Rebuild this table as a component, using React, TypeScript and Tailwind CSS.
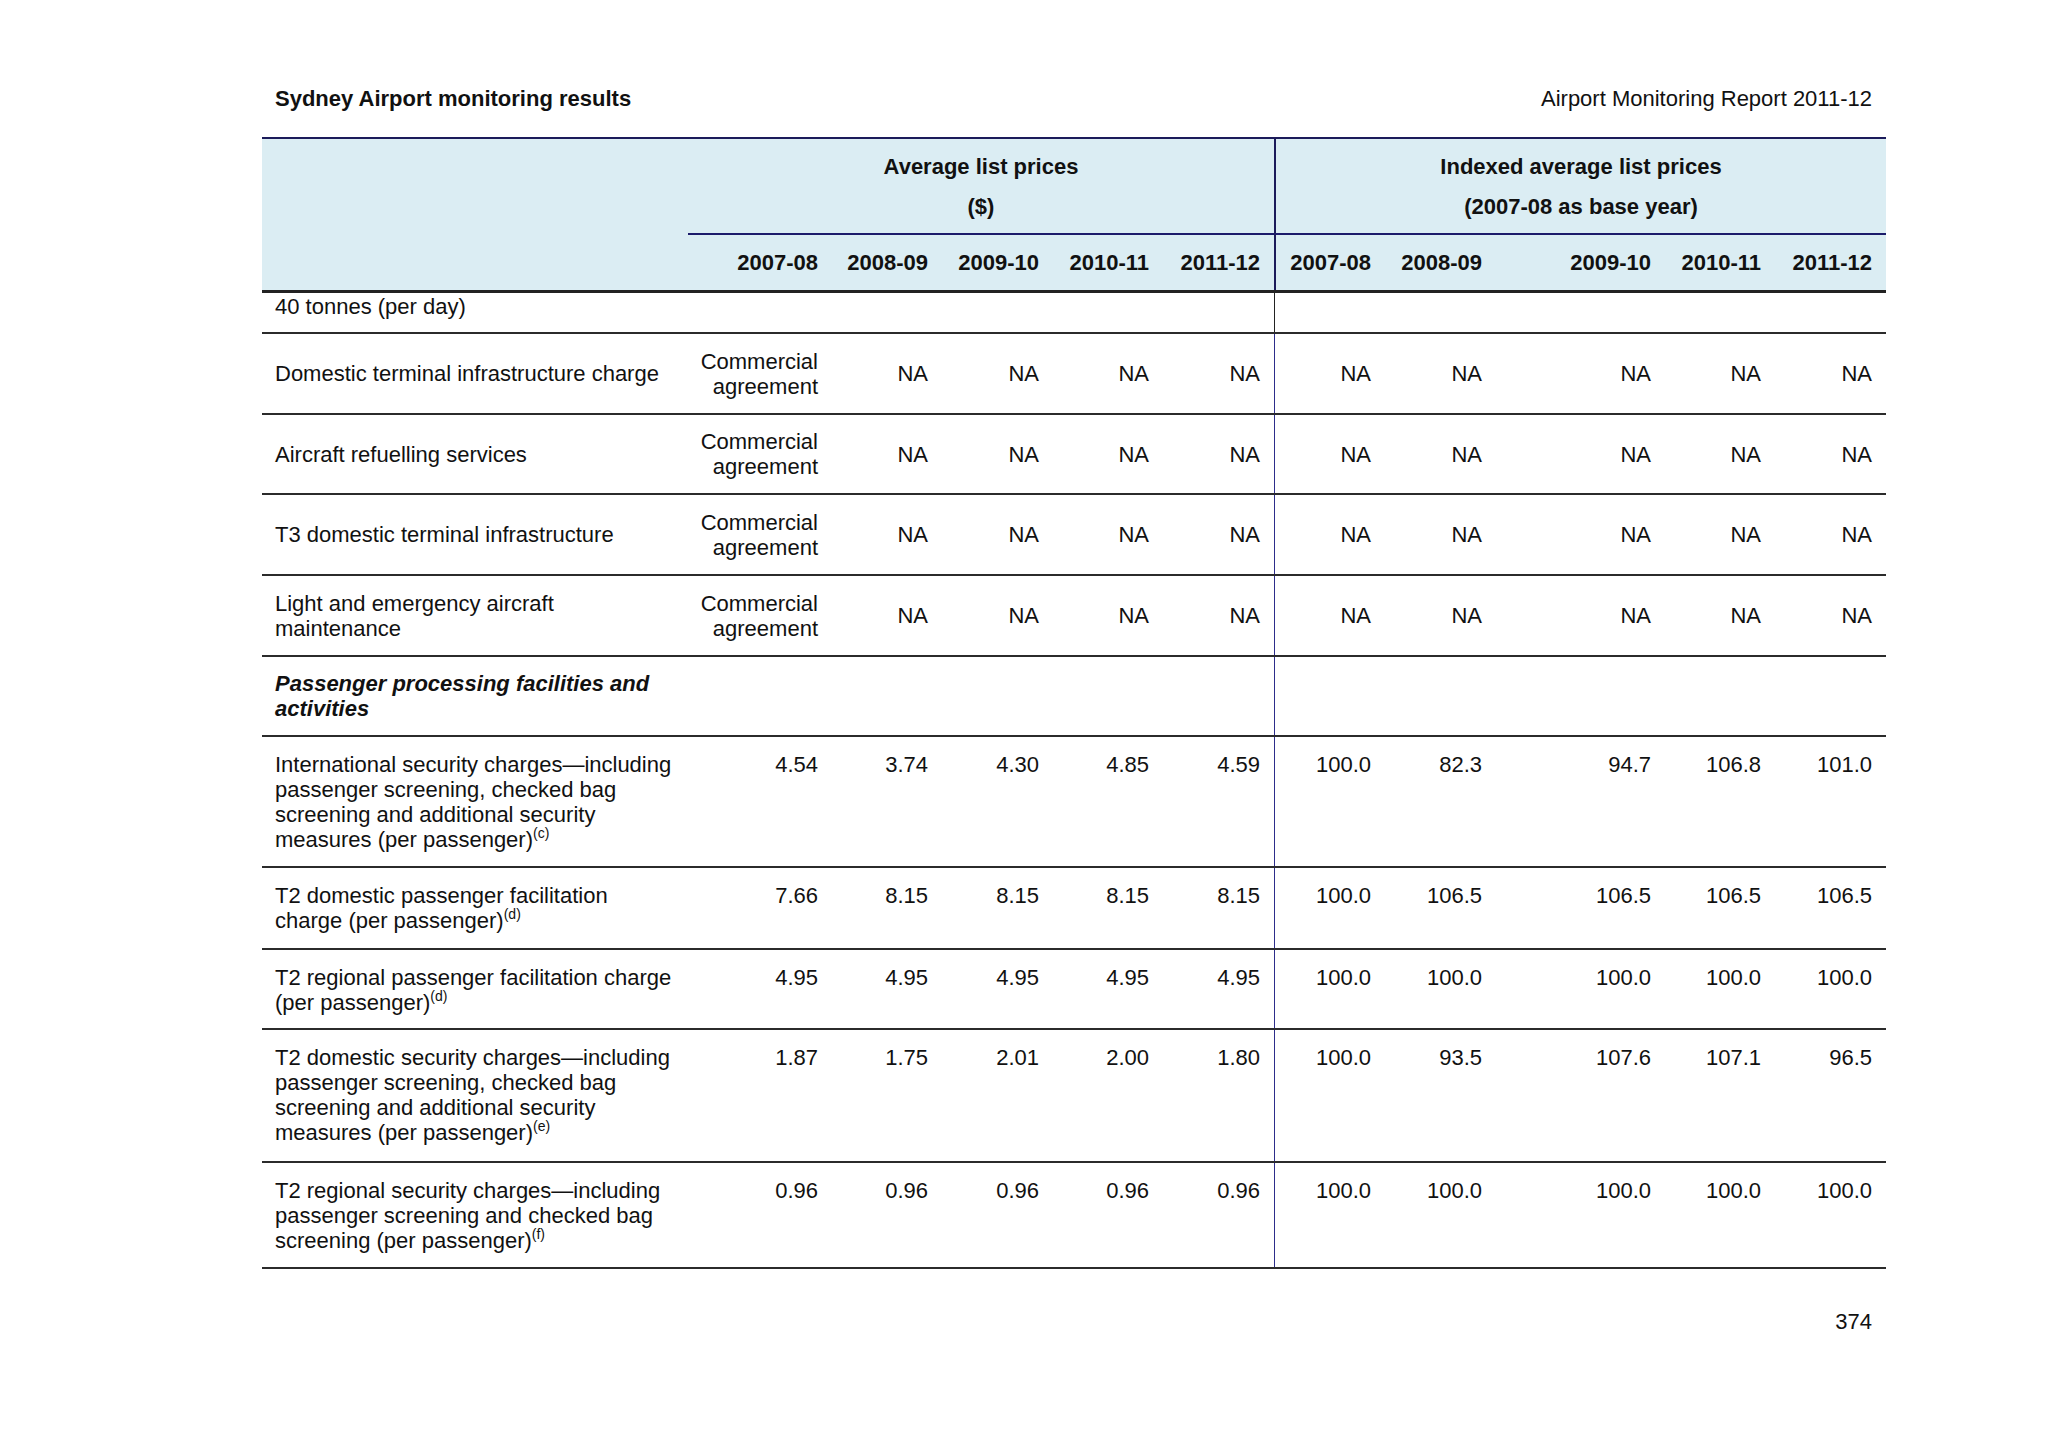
import React from "react";

// column grid shared by header and body rows
const COLS =
  "grid grid-cols-[426px_144px_110px_111px_110px_111px_111px_111px_169px_110px_111px]";

const years = ["2007-08", "2008-09", "2009-10", "2010-11", "2011-12"];

type Row = {
  label: React.ReactNode;
  vals: React.ReactNode[];
  align: "top" | "center" | "first";
  h: string;
};

const Sup = ({ children }: { children: React.ReactNode }) => (
  <sup className="text-[14px] top-[-9px]">{children}</sup>
);

const commercial = (
  <>
    Commercial
    <br />
    agreement
  </>
);
const na = [commercial, "NA", "NA", "NA", "NA", "NA", "NA", "NA", "NA", "NA"];

const rows: Row[] = [
  { label: "40 tonnes (per day)", vals: [], align: "first", h: "h-[41px]" },
  { label: "Domestic terminal infrastructure charge", vals: na, align: "center", h: "h-[81px]" },
  { label: "Aircraft refuelling services", vals: na, align: "center", h: "h-[80px]" },
  { label: "T3 domestic terminal infrastructure", vals: na, align: "center", h: "h-[81px]" },
  {
    label: (
      <>
        Light and emergency aircraft
        <br />
        maintenance
      </>
    ),
    vals: na,
    align: "center",
    h: "h-[81px]",
  },
  {
    label: (
      <span className="font-bold italic">
        Passenger processing facilities and
        <br />
        activities
      </span>
    ),
    vals: [],
    align: "center",
    h: "h-[80px]",
  },
  {
    label: (
      <>
        International security charges—including
        <br />
        passenger screening, checked bag
        <br />
        screening and additional security
        <br />
        measures (per passenger)<Sup>(c)</Sup>
      </>
    ),
    vals: ["4.54", "3.74", "4.30", "4.85", "4.59", "100.0", "82.3", "94.7", "106.8", "101.0"],
    align: "top",
    h: "h-[131px]",
  },
  {
    label: (
      <>
        T2 domestic passenger facilitation
        <br />
        charge (per passenger)<Sup>(d)</Sup>
      </>
    ),
    vals: ["7.66", "8.15", "8.15", "8.15", "8.15", "100.0", "106.5", "106.5", "106.5", "106.5"],
    align: "top",
    h: "h-[82px]",
  },
  {
    label: (
      <>
        T2 regional passenger facilitation charge
        <br />
        (per passenger)<Sup>(d)</Sup>
      </>
    ),
    vals: ["4.95", "4.95", "4.95", "4.95", "4.95", "100.0", "100.0", "100.0", "100.0", "100.0"],
    align: "top",
    h: "h-[80px]",
  },
  {
    label: (
      <>
        T2 domestic security charges—including
        <br />
        passenger screening, checked bag
        <br />
        screening and additional security
        <br />
        measures (per passenger)<Sup>(e)</Sup>
      </>
    ),
    vals: ["1.87", "1.75", "2.01", "2.00", "1.80", "100.0", "93.5", "107.6", "107.1", "96.5"],
    align: "top",
    h: "h-[133px]",
  },
  {
    label: (
      <>
        T2 regional security charges—including
        <br />
        passenger screening and checked bag
        <br />
        screening (per passenger)<Sup>(f)</Sup>
      </>
    ),
    vals: ["0.96", "0.96", "0.96", "0.96", "0.96", "100.0", "100.0", "100.0", "100.0", "100.0"],
    align: "top",
    h: "h-[106px]",
  },
];

const alignCls = (a: Row["align"]) =>
  a === "top" ? "pt-[15px]" : a === "first" ? "pt-[1px]" : "flex flex-col justify-center";

const BodyRow = ({ row }: { row: Row }) => {
  const cells = Array.from({ length: 10 }, (_, i) => row.vals[i] ?? "");
  return (
    <div className={`${COLS} ${row.h} border-b-2 border-[#2b2b2b]`}>
      <div className={`pl-[13px] whitespace-nowrap ${alignCls(row.align)}`}>{row.label}</div>
      {cells.map((v, i) => (
        <div
          key={i}
          className={`pr-[14px] text-right whitespace-nowrap ${alignCls(row.align)} ${
            i === 5
              ? row.align === "first"
                ? "border-l border-[#222]"
                : "border-l border-[#2d2d8a]"
              : ""
          }`}
        >
          {v}
        </div>
      ))}
    </div>
  );
};

export default function App() {
  return (
    <div className="min-h-screen h-[1447px] bg-white text-[#111] [font-family:'Liberation_Sans',Arial,sans-serif] text-[22px] leading-[25px]">
      <div className="ml-[262px] w-[1624px] pt-[86px]">
        {/* running header */}
        <div className="flex justify-between pl-[13px] pr-[14px]">
          <span className="font-bold">Sydney Airport monitoring results</span>
          <span>Airport Monitoring Report 2011-12</span>
        </div>

        {/* table */}
        <div className="mt-[26px]">
          <div className={`${COLS} bg-[#dbedf3] border-t-2 border-[#1b1b5a] border-b-[3px] border-b-[#222]`}>
            <div className="row-span-2" />
            <div className="col-span-5 h-[94px] flex flex-col items-center justify-center gap-[15px] font-bold">
              <span>Average list prices</span>
              <span>($)</span>
            </div>
            <div className="col-span-5 h-[94px] flex flex-col items-center justify-center gap-[15px] font-bold border-l-2 border-[#1b1b5a]">
              <span>Indexed average list prices</span>
              <span>(2007-08 as base year)</span>
            </div>
            {[...years, ...years].map((y, i) => (
              <div
                key={i}
                className={`h-[57px] border-t-2 border-t-[#1b1b6a] pr-[14px] flex items-center justify-end font-bold ${
                  i === 5 ? "border-l-2 border-l-[#1b1b5a]" : ""
                }`}
              >
                {y}
              </div>
            ))}
          </div>

          {rows.map((r, i) => (
            <BodyRow key={i} row={r} />
          ))}
        </div>

        <div className="mt-[40px] pr-[14px] text-right">374</div>
      </div>
    </div>
  );
}
